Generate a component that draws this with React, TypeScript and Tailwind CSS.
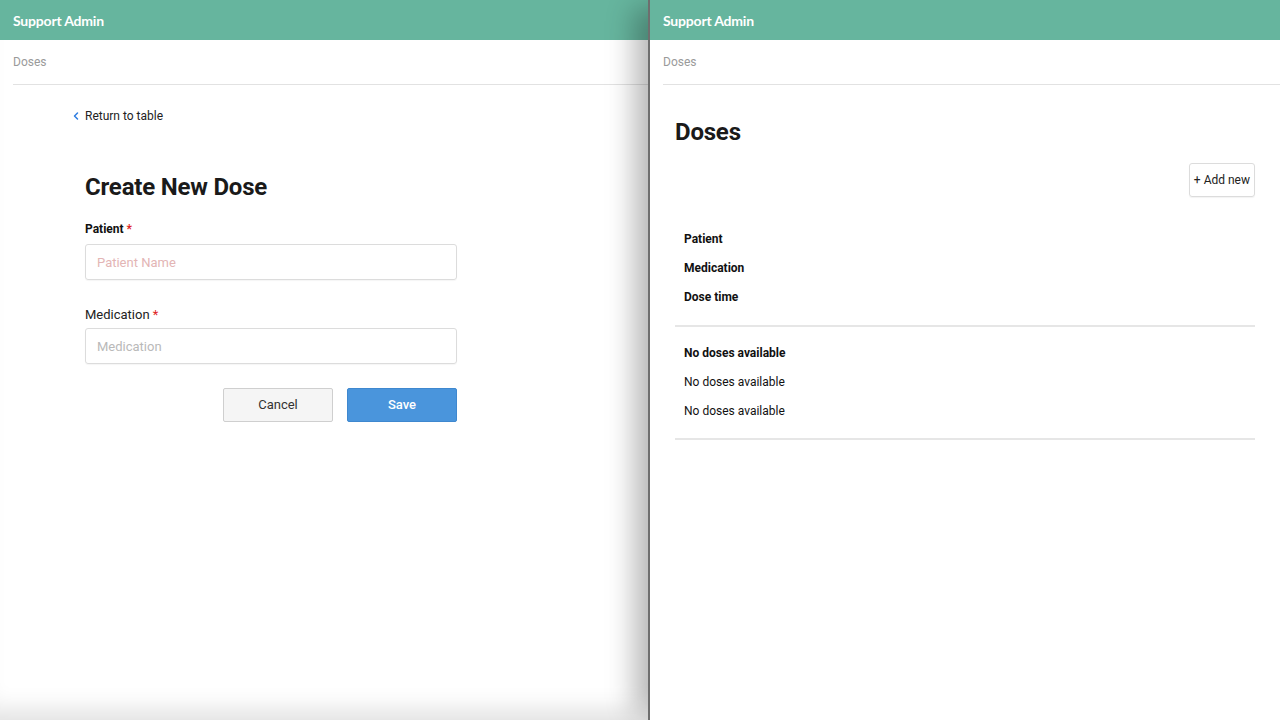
import { ChevronLeft } from 'lucide-react'

function TopBar() {
  return (
    <div className="h-[40px] bg-[#66b59e] flex items-center px-[13px]">
      <span className="text-white text-[14px] font-bold font-['Lato',sans-serif] tracking-[-0.2px]">Support Admin</span>
    </div>
  )
}

function Breadcrumb() {
  return (
    <div className="ml-[13px] h-[45px] flex items-center border-b border-[#e2e2e2]">
      <span className="text-[12px] text-[#9a9a9a]">Doses</span>
    </div>
  )
}

function CreateDose() {
  return (
    <div className="relative w-[648px] h-full flex flex-col bg-white shadow-[inset_0_-28px_24px_-18px_rgba(0,0,0,0.12)]">
      <TopBar />
      <Breadcrumb />
      <div className="pl-[85px] w-[457px] box-content">
        <a className="-ml-[15px] mt-[23px] flex items-center gap-[3px] text-[12px] text-[#222] leading-4">
          <ChevronLeft size={12} strokeWidth={3} className="text-[#2f7de1]" />
          Return to table
        </a>
        <h1 className="mt-[49px] text-[24px] leading-7 font-bold text-[#1a1a1a] tracking-[-0.2px]">Create New Dose</h1>
        <label className="mt-[20px] block text-[12px] leading-4 font-bold text-[#111]">
          Patient <span className="text-[#e02424]">*</span>
        </label>
        <input
          placeholder="Patient Name"
          className="mt-[7px] block w-[372px] h-[36px] px-[11px] text-[13px] rounded-[3px] border border-[#dcdcdc] shadow-[0_1px_1px_rgba(0,0,0,0.04)] placeholder:text-[#e3b5b5] outline-none"
        />
        <label className="mt-[27px] block text-[13px] leading-4 text-[#222]">
          Medication <span className="text-[#e02424]">*</span>
        </label>
        <input
          placeholder="Medication"
          className="mt-[5px] block w-[372px] h-[36px] px-[11px] text-[13px] rounded-[3px] border border-[#dcdcdc] shadow-[0_1px_1px_rgba(0,0,0,0.04)] placeholder:text-[#b9b9b9] outline-none"
        />
        <div className="mt-[24px] w-[372px] flex justify-end gap-[14px]">
          <button className="w-[110px] h-[34px] rounded-[2px] bg-[#f5f5f5] border border-[#cfcfcf] text-[13px] text-[#333]">
            Cancel
          </button>
          <button className="w-[110px] h-[34px] rounded-[2px] bg-[#4a95dc] border border-[#3f88cf] text-[13px] font-medium text-white">
            Save
          </button>
        </div>
      </div>
    </div>
  )
}

function DoseTable() {
  const headers = ['Patient', 'Medication', 'Dose time']
  const rows = ['No doses available', 'No doses available', 'No doses available']
  return (
    <div className="relative z-10 flex-1 h-full flex flex-col bg-white border-l-2 border-[#6e6e6e] shadow-[-22px_0_26px_-8px_rgba(0,0,0,0.28)]">
      <TopBar />
      <Breadcrumb />
      <div className="pl-[25px] pr-[25px]">
        <h1 className="mt-[33px] text-[24px] leading-7 font-bold text-[#1a1a1a] tracking-[-0.2px]">Doses</h1>
        <div className="mt-[17px] flex justify-end">
          <button className="h-[34px] px-[4px] rounded-[3px] border border-[#dcdcdc] text-[12px] text-[#222] shadow-[0_1px_1px_rgba(0,0,0,0.05)]">
            + Add new
          </button>
        </div>
        <div className="mt-[34px] pl-[9px] pb-[20px] flex flex-col gap-[13px] border-b-2 border-[#e6e6e6]">
          {headers.map(h => (
            <span key={h} className="text-[12px] leading-4 font-bold text-[#111]">{h}</span>
          ))}
        </div>
        <div className="pt-[18px] pl-[9px] pb-[19px] flex flex-col gap-[13px] border-b-2 border-[#e6e6e6]">
          {rows.map((r, i) => (
            <span key={i} className={`text-[12px] leading-4 text-[#111] ${i === 0 ? 'font-bold' : ''}`}>{r}</span>
          ))}
        </div>
      </div>
    </div>
  )
}

export default function App() {
  return (
    <div className="w-[1280px] h-[720px] flex overflow-hidden bg-white font-['Roboto',sans-serif]">
      <CreateDose />
      <DoseTable />
    </div>
  )
}
